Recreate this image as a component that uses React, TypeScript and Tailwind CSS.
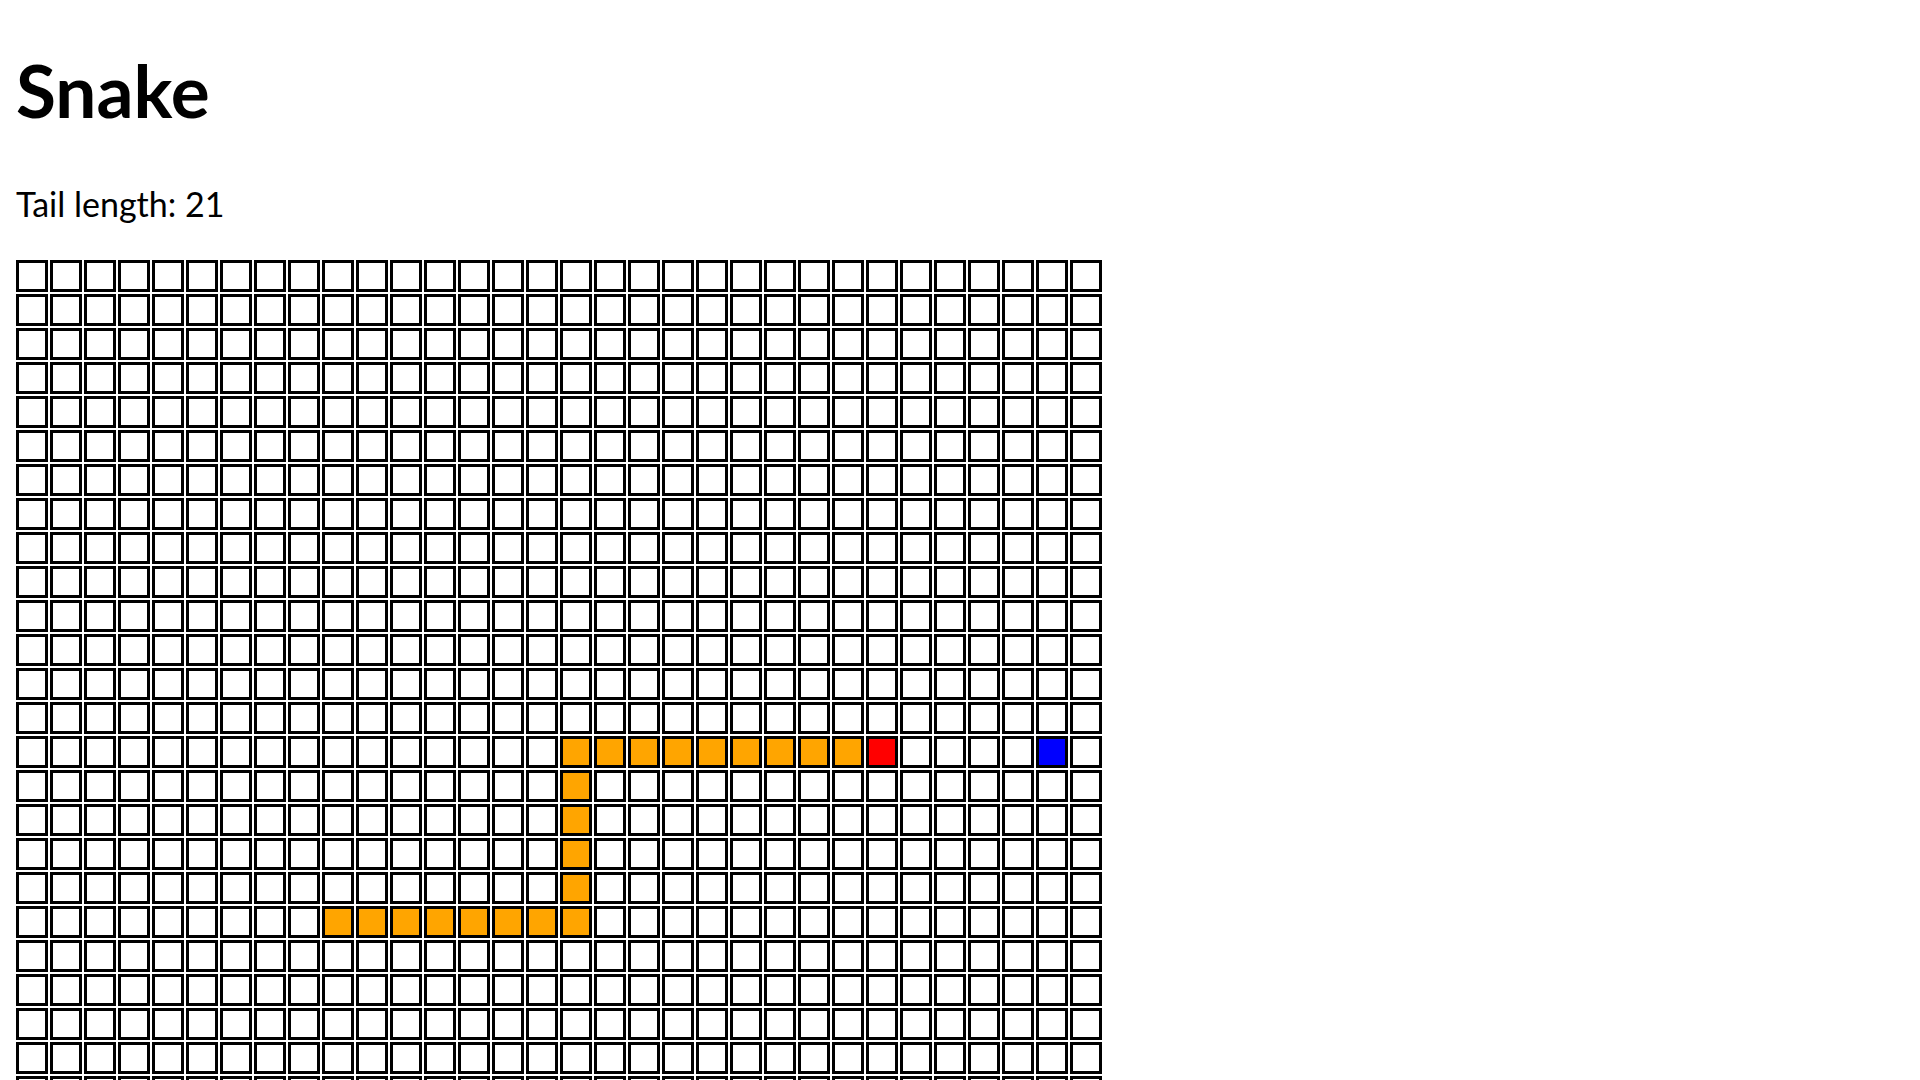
import { useMemo } from "react";

const SIZE = 32;

const head = { row: 14, col: 25 };
const food = { row: 14, col: 30 };

function buildTail() {
  const cells: { row: number; col: number }[] = [];
  for (let c = 24; c >= 16; c--) cells.push({ row: 14, col: c });
  for (let r = 15; r <= 18; r++) cells.push({ row: r, col: 16 });
  for (let c = 16; c >= 9; c--) cells.push({ row: 19, col: c });
  return cells;
}

export default function App() {
  const tail = useMemo(buildTail, []);
  const tailSet = useMemo(
    () => new Set(tail.map((t) => `${t.row}-${t.col}`)),
    [tail]
  );

  const cellClass = (row: number, col: number) => {
    if (row === head.row && col === head.col) return "bg-[#ff0000]";
    if (row === food.row && col === food.col) return "bg-[#0000ff]";
    if (tailSet.has(`${row}-${col}`)) return "bg-[#ffa500]";
    return "bg-white";
  };

  return (
    <div className="min-h-screen bg-white pl-4 pt-[50px] pb-[62px] text-black font-['Lato',sans-serif]">
      <h1 className="text-[73px] font-bold leading-[80px]">Snake</h1>
      <p className="mt-[54px] text-[34px] leading-[40px]">
        Tail length: {tail.length}
      </p>
      <div className="mt-[36px] grid w-max grid-cols-[repeat(32,32px)] gap-[2px]">
        {Array.from({ length: SIZE }).map((_, row) =>
          Array.from({ length: SIZE }).map((_, col) => (
            <div
              key={`${row}-${col}`}
              className={`h-8 w-8 border-[3px] border-black ${cellClass(row, col)}`}
            />
          ))
        )}
      </div>
    </div>
  );
}
